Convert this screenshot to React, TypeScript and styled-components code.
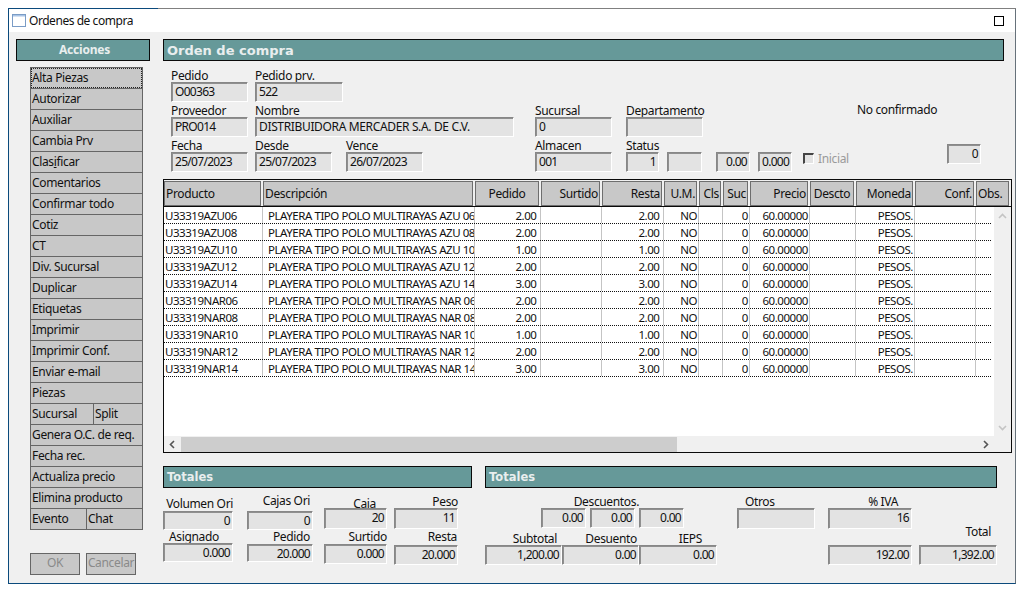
import React from "react";
import styled, { createGlobalStyle } from "styled-components";

const Global = createGlobalStyle`
  html, body { margin: 0; padding: 0; background: #fff; }
  body { font-family: "Noto Sans", "Open Sans", sans-serif; font-size: 12px; color: #111; letter-spacing: -0.35px; }
`;

const Page = styled.div`
  width: 1022px;
  height: 593px;
  padding: 8px 6px 8px 8px;
  box-sizing: border-box;
  overflow: hidden;
`;
const Win = styled.div`
  width: 1008px;
  height: 576px;
  box-sizing: border-box;
  border: 1px solid #0b4a7c;
  border-top: none;
  border-right-color: #66717a;
  background: #f0f0f0;
  display: flex;
  flex-direction: column;
`;
const TopEdge = styled.div`
  height: 1px;
  flex: none;
  margin: 0 -1px;
  background: linear-gradient(90deg, #0b4a7c 0 150px, #808080 150px);
`;
const TitleBar = styled.div`
  height: 23px;
  background: #fff;
  display: flex;
  align-items: center;
  padding: 0 11px 0 3px;
  gap: 3px;
  flex: none;
`;
const TitleText = styled.span`
  flex: 1;
  font-size: 12px;
  letter-spacing: -0.45px;
  line-height: 23px;
`;
const Body = styled.div`
  flex: 1;
  display: flex;
  min-height: 0;
  padding: 7px 0 0 7px;
  gap: 13px;
`;
const Side = styled.div`
  width: 134px;
  flex: none;
  display: flex;
  flex-direction: column;
`;
const Banner = styled.div`
  height: 22px;
  box-sizing: border-box;
  background: #669999;
  border: 1px solid #0a0a0a;
  color: #e9eeee;
  font-family: "DejaVu Sans", sans-serif;
  font-weight: 700;
  font-size: 11.5px;
  letter-spacing: 0;
  line-height: 20px;
  padding-left: 3px;
  flex: none;
`;
const SideBanner = styled(Banner)`
  font-family: "Noto Sans", sans-serif;
  font-size: 12px;
  letter-spacing: -0.2px;
  text-align: center;
`;
const HeadBanner = styled(Banner)`
  width: 841px;
  font-size: 13px;
  line-height: 21px;
`;
const Menu = styled.div`
  margin: 6px 0 0 14px;
  width: 113px;
  display: flex;
  flex-direction: column;
  border: 1px solid #666;
  box-sizing: border-box;
  background: #c8c8c8;
`;
const MenuRow = styled.div`
  display: flex;
  height: 21px;
  box-sizing: border-box;
  border-bottom: 1px solid #666;
  &:last-child { height: 20px; border-bottom: none; }
`;
const MenuBtn = styled.div<{ $w?: number; $focus?: boolean }>`
  flex: ${(p) => (p.$w ? `0 0 ${p.$w}px` : "1")};
  box-sizing: border-box;
  padding-left: 1px;
  line-height: 19px;
  font-size: 12px;
  white-space: nowrap;
  border-right: ${(p) => (p.$w ? "1px solid #666" : "none")};
  outline: ${(p) => (p.$focus ? "1px dotted #222" : "none")};
  outline-offset: -1px;
`;
const Actions = styled.div`
  display: flex;
  gap: 6px;
  margin: 23px 0 0 14px;
`;
const ActionBtn = styled.div`
  width: 50px;
  height: 22px;
  box-sizing: border-box;
  background: #c8c8c8;
  border: 1px solid #666;
  color: #8a8a8a;
  text-align: center;
  line-height: 18px;
  font-size: 12px;
  white-space: nowrap;
  overflow: hidden;
`;
const Main = styled.div`
  flex: 1;
  display: flex;
  flex-direction: column;
  min-width: 0;
`;
const Form = styled.div`
  display: flex;
  flex-direction: column;
  padding: 6px 0 0 8px;
  height: 118px;
  box-sizing: border-box;
  flex: none;
`;
const FormRow = styled.div`
  display: flex;
  height: 35px;
  align-items: flex-end;
`;
const FieldBox = styled.div<{ $w: number; $ml?: number; $mb?: number }>`
  width: ${(p) => p.$w}px;
  margin-left: ${(p) => p.$ml ?? 0}px;
  margin-bottom: ${(p) => p.$mb ?? 0}px;
  flex: none;
  display: flex;
  flex-direction: column;
`;
const Label = styled.div<{ $align?: string; $pad?: number; $gap?: number }>`
  height: 15px;
  line-height: 17px;
  font-size: 12px;
  white-space: nowrap;
  text-align: ${(p) => p.$align ?? "left"};
  padding-left: ${(p) => (p.$align === "right" ? 0 : p.$pad ?? 0)}px;
  padding-right: ${(p) => (p.$align === "right" ? p.$pad ?? 0 : 0)}px;
  margin-bottom: ${(p) => p.$gap ?? 0}px;
`;
const Input = styled.div<{ $right?: boolean; $h?: number; $num?: boolean }>`
  position: relative;
  height: ${(p) => p.$h ?? 20}px;
  box-sizing: border-box;
  background: #e3e3e3;
  border-top: 1px solid #878787;
  border-left: 1px solid #878787;
  border-right: 1px solid #fff;
  border-bottom: 1px solid #fff;
  box-shadow: inset 1px 1px 0 #8f8f8f;
  padding: 0 2px 0 3px;
  line-height: 17px;
  font-size: 12px;
  letter-spacing: ${(p) => (p.$num ? "-0.7px" : "-0.35px")};
  white-space: nowrap;
  overflow: hidden;
  text-align: ${(p) => (p.$right ? "right" : "left")};
`;
const Status = styled.div`
  width: 90px;
  margin-left: 154px;
  margin-bottom: 20px;
  line-height: 14px;
  flex: none;
  white-space: nowrap;
`;
const CheckWrap = styled.div`
  display: flex;
  align-items: center;
  gap: 4px;
  margin: 0 0 6px 11px;
  width: 144px;
  height: 16px;
  color: #9a9a9a;
  flex: none;
`;
const CheckBox = styled.span`
  width: 11px;
  height: 11px;
  box-sizing: border-box;
  background: #e3e3e3;
  border-top: 2px solid #444;
  border-left: 2px solid #444;
  border-right: 1px solid #fff;
  border-bottom: 1px solid #fff;
`;
const GridFrame = styled.div`
  width: 849px;
  height: 274px;
  box-sizing: border-box;
  border: 1px solid #0a0a0a;
  background: #fff;
  display: flex;
  flex-direction: column;
  flex: none;
`;
const COLS = "99px 212px 66px 61px 62px 35px 24px 27px 60px 46px 59px 61px 1fr";
const HeadRow = styled.div`
  display: grid;
  grid-template-columns: ${COLS};
  height: 27px;
  box-sizing: border-box;
  padding-top: 1px;
  background: #f0f0f0;
  border-bottom: 1px solid #0a0a0a;
  flex: none;
`;
const HeadCell = styled.div<{ $align: string }>`
  background: #c8c8c8;
  border: 1px solid #6e6e6e;
  box-sizing: border-box;
  line-height: 24px;
  font-size: 12px;
  padding: 0 1px;
  margin-right: 2px;
  white-space: nowrap;
  overflow: hidden;
  text-align: ${(p) => p.$align};
`;
const GridMid = styled.div`
  flex: 1;
  display: flex;
  min-height: 0;
`;
const Rows = styled.div`
  flex: 1;
  min-width: 0;
  padding-right: 3px;
  overflow: hidden;
`;
const Row = styled.div`
  display: grid;
  grid-template-columns: ${COLS};
  height: 17px;
  box-sizing: border-box;
  border-bottom: 1px dotted #111;
`;
const Cell = styled.div<{ $right?: boolean; $pad?: number }>`
  font-size: 11.5px;
  letter-spacing: -0.45px;
  line-height: 17px;
  white-space: nowrap;
  overflow: hidden;
  border-right: 1px solid #c4c4c4;
  box-sizing: border-box;
  padding: 0 1px 0 ${(p) => p.$pad ?? 1}px;
  text-align: ${(p) => (p.$right ? "right" : "left")};
  &:last-child { border-right: none; }
`;
const VScroll = styled.div`
  width: 17px;
  flex: none;
  background: #f0f0f0;
  display: flex;
  flex-direction: column;
  justify-content: space-between;
  align-items: center;
  padding: 5px 0 4px;
  box-sizing: border-box;
`;
const HScroll = styled.div`
  height: 16px;
  flex: none;
  background: #f0f0f0;
  display: flex;
  align-items: center;
`;
const ArrowBtn = styled.div`
  width: 17px;
  height: 16px;
  flex: none;
  display: flex;
  align-items: center;
  justify-content: center;
`;
const Track = styled.div`
  flex: 1;
  height: 15px;
  display: flex;
`;
const Thumb = styled.div`
  width: 496px;
  height: 15px;
  background: #cdcdcd;
`;
const Corner = styled.div`
  width: 17px;
  flex: none;
`;
const Totals = styled.div`
  display: flex;
  gap: 13px;
  margin-top: 13px;
`;
const Panel = styled.div<{ $w: number }>`
  width: ${(p) => p.$w}px;
  flex: none;
  display: flex;
  flex-direction: column;
`;
const TotRow = styled.div<{ $h: number }>`
  display: flex;
  height: ${(p) => p.$h}px;
  align-items: flex-end;
`;

const Chevron = ({ d, color = "#555" }: { d: string; color?: string }) => (
  <svg width="9" height="9" viewBox="0 0 9 9" fill="none">
    <path d={d} stroke={color} strokeWidth="1.6" />
  </svg>
);

const products = [
  ["U33319AZU06", "AZU 06", "2.00"],
  ["U33319AZU08", "AZU 08", "2.00"],
  ["U33319AZU10", "AZU 10", "1.00"],
  ["U33319AZU12", "AZU 12", "2.00"],
  ["U33319AZU14", "AZU 14", "3.00"],
  ["U33319NAR06", "NAR 06", "2.00"],
  ["U33319NAR08", "NAR 08", "2.00"],
  ["U33319NAR10", "NAR 10", "1.00"],
  ["U33319NAR12", "NAR 12", "2.00"],
  ["U33319NAR14", "NAR 14", "3.00"],
];
const heads: [string, string][] = [
  ["Producto", "left"], ["Descripción", "left"], ["Pedido", "center"], ["Surtido", "right"], ["Resta", "right"],
  ["U.M.", "right"], ["Cls", "right"], ["Suc", "right"], ["Precio", "right"], ["Descto", "center"], ["Moneda", "right"],
  ["Conf.", "right"], ["Obs.", "left"],
];
const menu: [string, string?][] = [
  ["Autorizar"], ["Auxiliar"], ["Cambia Prv"], ["Clasificar"], ["Comentarios"], ["Confirmar todo"], ["Cotiz"], ["CT"],
  ["Div. Sucursal"], ["Duplicar"], ["Etiquetas"], ["Imprimir"], ["Imprimir Conf."], ["Enviar e-mail"], ["Piezas"],
  ["Sucursal", "Split"], ["Genera O.C. de req."], ["Fecha rec."], ["Actualiza precio"], ["Elimina producto"], ["Evento", "Chat"],
];

type FP = { label?: string; value?: string; w: number; ml?: number; mb?: number; right?: boolean; align?: string; pad?: number; gap?: number; h?: number };
const Field = ({ label, value, w, ml, mb, right, align, pad, gap, h }: FP) => (
  <FieldBox $w={w} $ml={ml} $mb={mb}>
    {label !== undefined && <Label $align={align} $pad={pad} $gap={gap}>{label}</Label>}
    <Input $right={right} $h={h} $num={/\d/.test(value ?? "")}>{value}</Input>
  </FieldBox>
);

export default function App() {
  return (
    <Page>
      <Global />
      <Win>
        <TopEdge />
        <TitleBar>
          <svg width="14" height="13" viewBox="0 0 14 13">
            <rect x="0.5" y="0.5" width="13" height="12" fill="#fff" stroke="#7a9cc6" />
            <rect x="1" y="1" width="12" height="1.5" fill="#a9c4e6" />
          </svg>
          <TitleText>Ordenes de compra</TitleText>
          <svg width="10" height="10" viewBox="0 0 10 10">
            <rect x="0.5" y="0.5" width="9" height="9" fill="#fff" stroke="#000" />
          </svg>
        </TitleBar>
        <Body>
          <Side>
            <SideBanner>Acciones</SideBanner>
            <Menu>
              <MenuRow><MenuBtn $focus>Alta Piezas</MenuBtn></MenuRow>
              {menu.map(([a, b]) => (
                <MenuRow key={a}>
                  {b ? (
                    <>
                      <MenuBtn $w={a === "Sucursal" ? 63 : 56}>{a}</MenuBtn>
                      <MenuBtn>{b}</MenuBtn>
                    </>
                  ) : (
                    <MenuBtn>{a === "Clasificar" ? <>Clas<u>i</u>ficar</> : a}</MenuBtn>
                  )}
                </MenuRow>
              ))}
            </Menu>
            <Actions>
              <ActionBtn>OK</ActionBtn>
              <ActionBtn>Cancelar</ActionBtn>
            </Actions>
          </Side>
          <Main>
            <HeadBanner>Orden de compra</HeadBanner>
            <Form>
              <FormRow>
                <Field label="Pedido" value="O00363" w={77} />
                <Field label="Pedido prv." value="522" w={88} ml={7} />
              </FormRow>
              <FormRow>
                <Field label="Proveedor" value="PRO014" w={77} />
                <Field label="Nombre" value="DISTRIBUIDORA MERCADER S.A. DE C.V." w={259} ml={7} />
                <Field label="Sucursal" value="0" w={77} ml={21} />
                <Field label="Departamento" w={77} ml={14} />
                <Status>No confirmado</Status>
              </FormRow>
              <FormRow>
                <Field label="Fecha" value="25/07/2023" w={77} />
                <Field label="Desde" value="25/07/2023" w={77} ml={7} />
                <Field label="Vence" value="26/07/2023" w={77} ml={14} />
                <Field label="Almacen" value="001" w={77} ml={112} />
                <Field label="Status" value="1" w={33} ml={14} right />
                <Field w={35} ml={8} />
                <Field value="0.00" w={34} ml={14} right />
                <Field value="0.000" w={34} ml={8} />
                <CheckWrap>
                  <CheckBox />
                  <span>Inicial</span>
                </CheckWrap>
                <Field value="0" w={34} mb={8} right />
              </FormRow>
            </Form>
            <GridFrame>
              <HeadRow>
                {heads.map(([h, a]) => (
                  <HeadCell key={h} $align={a}>{h}</HeadCell>
                ))}
              </HeadRow>
              <GridMid>
                <Rows>
                  {products.map(([code, suf, q]) => (
                    <Row key={code}>
                      <Cell>{code}</Cell>
                      <Cell $pad={5}>PLAYERA TIPO POLO MULTIRAYAS {suf}</Cell>
                      <Cell $right>{q}&nbsp;</Cell>
                      <Cell />
                      <Cell $right>{q}&nbsp;</Cell>
                      <Cell $right>NO</Cell>
                      <Cell />
                      <Cell $right>0</Cell>
                      <Cell $right>60.00000</Cell>
                      <Cell />
                      <Cell $right>PESOS.</Cell>
                      <Cell />
                      <Cell />
                    </Row>
                  ))}
                </Rows>
                <VScroll>
                  <Chevron d="M1 6 L4.5 2.5 L8 6" color="#c4c4c4" />
                  <Chevron d="M1 3 L4.5 6.5 L8 3" color="#c4c4c4" />
                </VScroll>
              </GridMid>
              <HScroll>
                <ArrowBtn><Chevron d="M6 1 L2.5 4.5 L6 8" /></ArrowBtn>
                <Track><Thumb /></Track>
                <ArrowBtn><Chevron d="M3 1 L6.5 4.5 L3 8" /></ArrowBtn>
                <Corner />
              </HScroll>
            </GridFrame>
            <Totals>
              <Panel $w={309}>
                <Banner>Totales</Banner>
                <TotRow $h={42}>
                  <Field label="Volumen Ori" value="0" w={70} right align="right" gap={1} h={19} />
                  <Field label="Cajas Ori" value="0" w={66} ml={14} right align="right" pad={3} gap={4} h={19} />
                  <Field label="Caja" value="20" w={63} ml={11} mb={1} right align="right" pad={11} gap={-2} h={21} />
                  <Field label="Peso" value="11" w={64} ml={7} mb={1} right align="right" h={21} />
                </TotRow>
                <TotRow $h={35}>
                  <Field label="Asignado" value="0.000" w={70} mb={3} right pad={6} h={19} />
                  <Field label="Pedido" value="20.000" w={66} ml={14} mb={3} right align="right" pad={3} gap={1} h={18} />
                  <Field label="Surtido" value="0.000" w={63} ml={11} mb={1} right align="right" gap={1} />
                  <Field label="Resta" value="20.000" w={64} ml={7} right align="right" pad={1} gap={2} />
                </TotRow>
              </Panel>
              <Panel $w={512}>
                <Banner>Totales</Banner>
                <TotRow $h={41}>
                  <FieldBox $w={143} $ml={56} $mb={1}>
                    <Label $align="right" $pad={45}>Descuentos.</Label>
                    <TotRow $h={20}>
                      <Field value="0.00" w={45} right />
                      <Field value="0.00" w={45} ml={4} right />
                      <Field value="0.00" w={45} ml={4} right />
                    </TotRow>
                  </FieldBox>
                  <Field label="Otros" w={78} ml={53} pad={8} h={21} />
                  <Field label="% IVA" value="16" w={84} ml={13} right align="right" pad={14} h={21} />
                </TotRow>
                <TotRow $h={36}>
                  <Field label="Subtotal" value="1,200.00" w={77} right align="right" pad={5} />
                  <Field label="Desuento" value="0.00" w={77} right align="right" pad={2} />
                  <Field label="IEPS" value="0.00" w={78} right align="right" pad={15} />
                  <Field value="192.00" w={84} ml={111} right />
                  <FieldBox $w={78} $ml={7}>
                    <Label $align="right" $pad={6} $gap={7}>Total</Label>
                    <Input $right $num>1,392.00</Input>
                  </FieldBox>
                </TotRow>
              </Panel>
            </Totals>
          </Main>
        </Body>
      </Win>
    </Page>
  );
}
